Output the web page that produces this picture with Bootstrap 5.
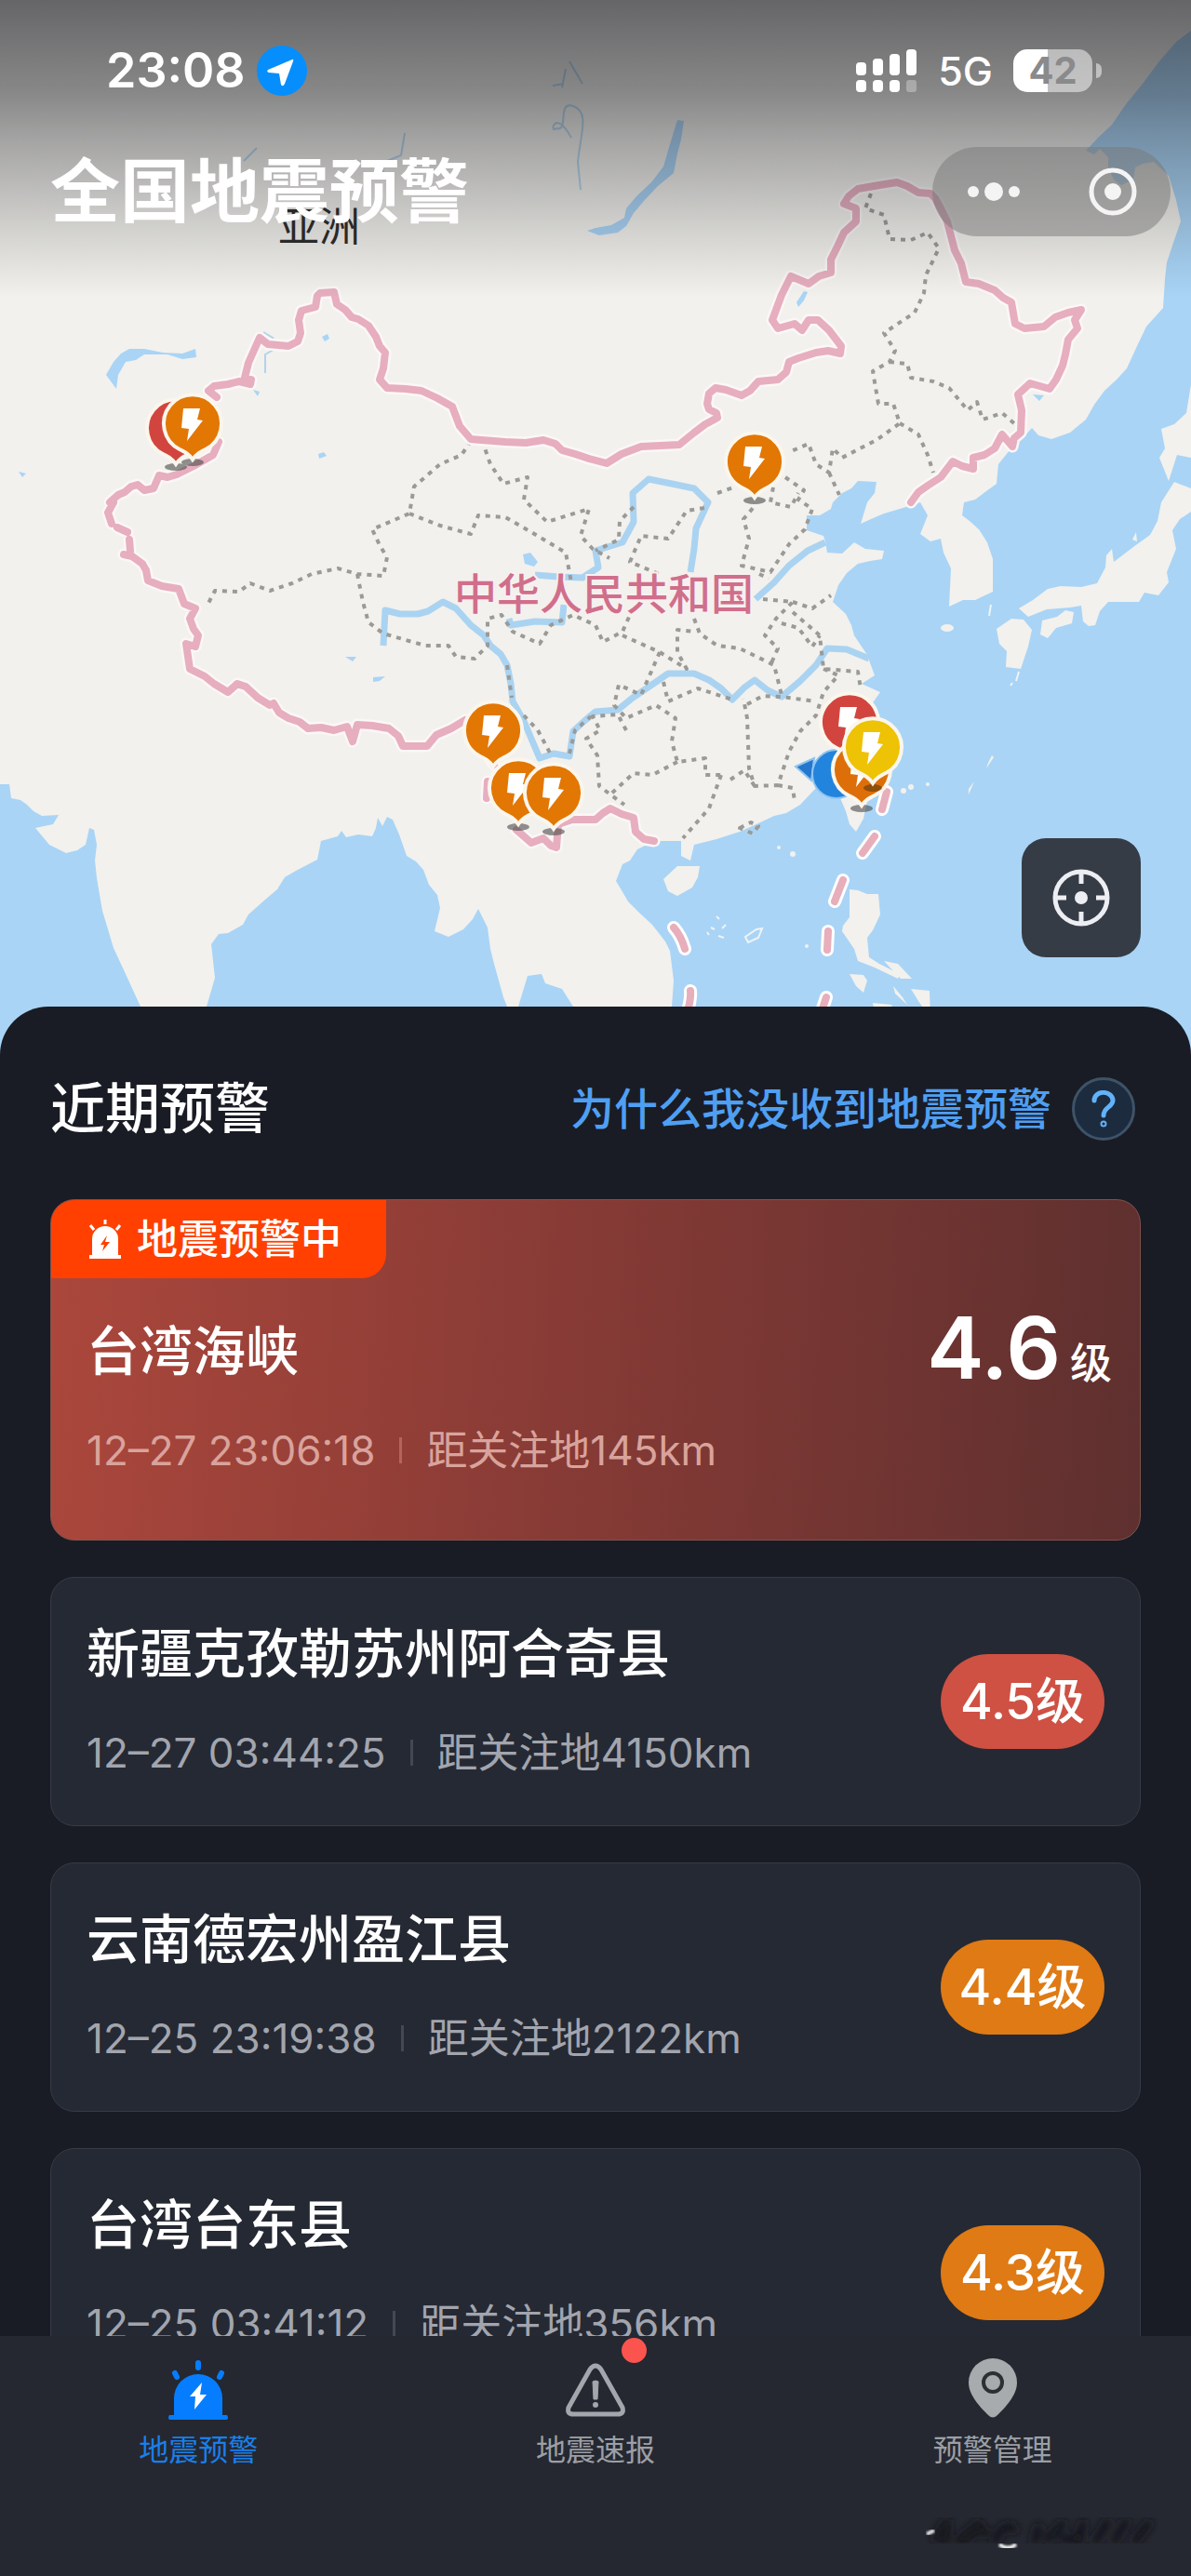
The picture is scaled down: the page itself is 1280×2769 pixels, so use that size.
<!DOCTYPE html>
<html lang="zh-CN">
<head>
<meta charset="utf-8">
<meta name="viewport" content="width=device-width, initial-scale=1">
<title>全国地震预警</title>
<link href="https://cdn.jsdelivr.net/npm/bootstrap@5.3.0/dist/css/bootstrap.min.css" rel="stylesheet">
<style>
  :root { --sheet: #191c24; --panel: #252933; --muted: #a2a5ae; --gutter: 54px; }
  body { background: var(--sheet); color: #fff; font-family: Inter, "Noto Sans CJK SC", sans-serif; }
  .map-svg { display: block; width: 100%; height: auto; }
  .map-shade { height: 320px; background: linear-gradient(rgba(26,27,32,.65) 0, rgba(26,27,32,.49) 100px, rgba(26,27,32,.36) 150px, rgba(26,27,32,.25) 200px, rgba(26,27,32,.14) 250px, rgba(26,27,32,0) 320px); }
  .status-row { height: 152px; padding: 0 96px 0 114px; }
  .clock { font-size: 52px; font-weight: 600; line-height: 60px; }
  .clock-group { gap: 12px; }
  .net { font-size: 43px; font-weight: 500; line-height: 48px; }
  .net-group { gap: 22px; }
  .battery { width: 85px; height: 46px; border-radius: 15px; background: linear-gradient(90deg, #fff 43%, rgba(255,255,255,.5) 43%); color: #8a8a8c; font-size: 40px; font-weight: 700; line-height: 46px; }
  .battery-tip { width: 6px; height: 16px; border-radius: 0 8px 8px 0; background: rgba(255,255,255,.5); }
  .title-row { padding: 0 22px 0 var(--gutter); height: 108px; }
  .page-title { font-size: 75px; font-weight: 700; line-height: 96px; }
  .capsule { width: 256px; height: 96px; padding: 0 36px; border-radius: 48px; background: rgba(120,120,120,.5); }
  .btn-plain { background: none; border: 0; padding: 0; line-height: 0; }
  .locate { right: var(--gutter); bottom: 111px; width: 128px; height: 128px; border-radius: 26px; background: #363c45; }
  .sheet { position: relative; margin-top: -58px; padding: 74px var(--gutter) 300px; background: var(--sheet); border-radius: 52px 52px 0 0; }
  .sheet-head { margin-bottom: 61px; padding-right: 6px; }
  .sheet-title { font-size: 59px; font-weight: 500; line-height: 72px; }
  .why { font-size: 47px; font-weight: 500; line-height: 72px; color: #4f9ff2; gap: 22px; }
  .q-mark { width: 68px; height: 68px; border-radius: 50%; border: 3px solid #3e5368; background: #1d2b3f; color: #62b2f8; }
  .quake-list { gap: 39px; }
  .quake { border: 1px solid #373b45; border-radius: 26px; background: var(--panel); overflow: hidden; }
  .quake-body { padding: 50px 38px; }
  .quake-live { border-color: #80514c; background: linear-gradient(93deg, #ab473c, #853a35 50%, #5e302f); }
  .quake-live .quake-body { padding: 47px 30px 68px 38px; }
  .live-tag { width: 360px; height: 84px; padding-left: 40px; gap: 16px; border-radius: 0 0 26px 0; background: #ff4000; font-size: 44px; font-weight: 500; line-height: 84px; }
  .place { font-size: 57px; font-weight: 500; line-height: 64px; margin-bottom: 46px; }
  .facts { font-size: 44px; line-height: 56px; color: var(--muted); }
  .quake-live .facts { color: #d9a39c; }
  .facts-bar { width: 3px; height: 28px; margin: 0 26px; background: #444852; }
  .quake-live .facts-bar { background: #b3655d; }
  .big-mag { height: 56px; gap: 10px; font-size: 45px; font-weight: 500; line-height: 56px; }
  .big-mag strong { font-size: 92px; font-weight: 600; line-height: 56px; }
  .mag { width: 176px; height: 102px; border-radius: 51px; font-size: 53px; font-weight: 500; line-height: 102px; }
  .mag-red { background: #ce5144; }
  .mag-orange { background: #df7a14; }
  .tabs { height: 258px; padding-top: 22px; background: #252830; }
  .tab { font-size: 32px; line-height: 40px; color: #9c9fa5; }
  .tab svg { display: block; margin-bottom: 9px; }
  .tab.active { color: #1a7fe8; }
  .tab-dot { width: 27px; height: 27px; left: 50%; top: -20px; margin-left: 28px; background: #fb544f; }
  .signature { right: 28px; bottom: 22px; }
</style>
</head>
<body>

<header class="position-relative">
  <svg class="map-svg" viewBox="0 0 1280 1140" role="img" aria-label="地图">
    <defs>
      <path id="drop" d="M0 39C-4 33-8 31-14 28A31 31 0 1 1 14 28C8 31 4 33 0 39Z"/>
      <path id="bolt" d="M-10-16H8L5-4 11-3-6 19-4 6-12 5Z" fill="#fff"/>
      <g id="foot"><ellipse cy="42" rx="12" ry="4" fill="#4a4a4a" opacity=".6"/></g>
      <path id="frontier" d="M118 540L127 532 134 529 141 523 148 521 155 527 165 525 171 511 180 513 190 510 208 501 229 489 235 475M233 427L224 420 230 415 245 413 257 410 269 413 270 408 263 406 267 390 279 363 288 370 310 372 320 367 323 358 321 344 324 334 339 330 341 318 344 315 359 314 362 327 371 333 378 341 385 343 396 350 404 362 408 372 414 379 412 396 408 408 416 417 436 418 453 420 470 428 486 437 494 458 506 472 543 475 565 476 584 473 597 477 604 484 618 488 633 493 652 498 668 488 689 480 730 478 746 465 758 456 771 449 770 444 762 440 760 434 762 423 769 417 780 419 797 425 806 420 815 410 836 408 845 400 848 389 858 385 877 379 890 377 903 380 904 372 891 355 879 344 869 344 862 355 854 348 836 353 830 344 840 317 850 297 869 305 880 297 893 293 893 279 900 265 907 250 920 238 920 224 907 219 912 211 922 203 945 199 964 196 975 200 987 207 1000 208 1005 213 1012 226 1018 238 1026 269 1033 283 1038 303 1052 305 1069 312 1078 320 1087 325 1091 348 1101 353 1122 351 1134 341 1148 336 1162 333 1155 344 1158 353 1148 365 1145 381 1142 393 1135 408 1128 418 1107 412 1094 424 1098 441 1097 465 1090 471 1088 480 1077 467 1069 482 1058 489 1046 492 1046 504 1034 501 1024 496 1011 513 997 522 987 529 979 540M122 540L116 551 120 563M126 567L137 572M139 580L140 592M133 596L142 598 153 606 157 613 159 624 174 630 192 633 198 649 210 654 204 665 208 676 213 683 210 695 200 692 204 719 220 727 230 735 245 744 255 735 264 738 277 750 290 758 294 756 300 766 310 772 322 776 331 783 345 782 359 785 373 781 379 797 384 779 400 780 418 783 428 791 433 802 459 802 469 790 485 783 500 774 531 822M524 840L523 858M555 892L571 906 584 901 592 909 598 911 600 886 615 881 640 881 648 874 656 869 668 875 681 879 683 894 692 902 703 904"/>
    </defs>
    <rect width="1280" height="1140" fill="#f2f1ed"/>
    <g fill="#a9d4f6">
      <path d="M0 843H10L12 858 22 860 29 865 36 872 45 877 63 876 57 886 38 890 53 908 71 917 83 914 92 908 96 890 101 892 104 908 102 925 104 944 110 979 122 1019 135 1047 151 1082 165 1140H0Z"/>
      <path d="M215 1140L222 1082 231 1051 227 1015 235 1004 245 1003 261 994 267 983 285 967 298 956 306 943 318 936 341 924 345 904 363 899 367 893 372 900 385 897 400 899 404 890 406 879 411 888 416 878 422 881 429 897 437 920 447 926 455 935 461 951 470 962 473 976 467 1001 482 1007 498 999 508 988 514 977 524 997 527 1020 531 1036 541 1072 545 1082 550 1140ZM545 1140L557 1082 567 1049 582 1047 586 1057 604 1063 616 1082 640 1140Z"/>
      <path d="M722 1140V1082L724 1054 720 1022 715 1012 701 994 688 982 675 969 668 957 662 947 669 929 677 925 685 913 703 904 732 904 732 920 742 925 746 908 770 902 795 894 815 885 832 877 845 874 860 865 877 847 890 825 901 804 920 780 934 761 946 744 926 735 940 726 932 704 918 683 915 672 909 660 895 647 901 629 910 616 922 606 935 603 948 601 950 592 930 590 918 583 905 595 889 594 887 582 885 576 867 570 867 554 881 554 893 547 895 540 905 530 915 525 922 517 942 518 940 530 932 540 925 563 936 558 950 552 967 547 989 540 997 554 989 574 1000 582 1011 579 1014 594 1022 611 1020 652 1035 645 1048 645 1067 636 1067 601 1061 583 1052 569 1042 560 1034 554 1036 540 1048 537 1060 528 1071 520 1073 499 1089 479 1100 470 1109 460 1116 468 1130 472 1150 465 1167 451 1176 435 1187 420 1200 408 1211 396 1222 372 1232 351 1250 331 1252 300 1254 282 1262 258 1269 238 1264 215 1256 189 1240 174 1228 176 1220 180 1218 193 1205 199 1197 193 1191 180 1191 169 1182 160 1176 166 1167 162 1180 148 1195 134 1210 112 1228 90 1245 67 1264 45 1280 33V1140Z"/>
      <path d="M728 129L735 130 732 150 728 165 724 186 707 200 692 216 681 229 673 243 664 250 644 253 631 248 640 245 657 242 671 234 673 224 685 210 700 196 713 179 720 155ZM114 403L122 389 130 380 139 375 155 375 175 379 196 380 210 375 211 384 196 386 180 381 155 381 146 387 135 389 127 403 125 418ZM856 325L864 313 868 314 864 323 858 330Z"/>
      <path d="M272 419l7 2-2 5zM342 488l6-2 3 4-8 3zM346 362l6-3 2 5-5 3zM20 507l8 2-4 4zM562 596l8-2 8 10-4 5-10-3zM401 728l13-1-6 5-7 1zM371 706h12l-4 5zM1110 424l12 1-5 6z"/>
    </g>
    <g fill="none" stroke="#9cc9ea" stroke-width="2" opacity=".75">
      <path d="M283 357l10 6 6 10-14 8 0 20M412 190l-1-15 20-8 4-24M614 148c-18-33-24-3-16-10 14 4 0-30 18-24s8 30 5 60l3 30M594 92l12-2M604 94l4-20M612 66l14 24M262 173l14-14"/>
    </g>
    <g fill="none" stroke="#aad3f1" stroke-width="7" stroke-linejoin="round">
      <path d="M412 694L414 656 430 660 449 660 460 657 476 647 490 654 506 672 520 683 527 694 538 703 545 715 549 735 551 754 563 775 571 794 580 815 595 810 612 813 616 786 628 775 640 765 664 763 680 750 705 733 718 724 746 724 762 731 775 740 787 752 800 739 811 731 825 742 840 749 860 732 877 715 889 697 910 698 934 708"/>
      <path d="M547 665L549 672 575 668 604 669 606 650M575 618L600 620 626 621 643 610 640 592 669 583 681 561 680 530 697 515 722 520 746 525 761 540 748 568 746 590 742 615M812 644L832 626 848 608 868 592 887 583"/>
    </g>
    <g fill="none" stroke="#9a9a97" stroke-width="4" stroke-dasharray="5 6" stroke-linejoin="round">
      <path d="M506 474L496 489 473 499 445 523 440 552 400 569 408 586 416 599 412 619 384 617 363 611 335 617 314 627 290 635 269 627 257 636 231 635 222 652"/>
      <path d="M384 617L390 647 396 669 412 681 457 694 482 694 490 706 510 708 524 694 524 665 539 661 551 679 580 692 592 672 616 661 640 672 648 690 669 679 677 661"/>
      <path d="M518 473L527 499 541 520 567 513 563 537 588 561 633 547 624 576 637 590 655 600M440 552L473 565 506 574 514 554 543 556 571 572 608 594 614 626"/>
      <path d="M936 208L930 224 950 231 956 257 979 258 997 250 1009 267 995 296 993 315 983 336 950 358 962 377 956 389 938 399 944 434 960 434 967 455 942 473 905 492 895 482 891 508 877 499 869 477 848 486M956 389L975 391 979 406 1003 410 1020 417 1040 441 1050 432 1056 451 1077 444 1091 456M967 455L987 467 997 489 1003 508M891 508L902 532"/>
      <path d="M844 513L864 527 858 537 873 547 865 569 848 585 828 615 797 608 805 579 799 558 811 544M833 513L828 540 850 545 858 530M771 530L791 523M757 546L738 549 718 579 689 576 677 604 713 619M681 545L666 560 665 580 640 592"/>
      <path d="M746 665L752 681 771 694 795 697 832 715 840 747M816 617L826 622M820 644L852 647 834 665 822 683 836 697 828 715M852 647L873 654 893 640M840 670L858 675 873 695 881 683M852 658L881 683 885 719 922 722 925 740M885 719L901 726 885 744 877 769 860 786 848 808 836 844 811 845 805 826 803 772 799 751M836 844L852 847 854 861M803 757L820 748 840 749 877 754"/>
      <path d="M669 683L709 701 738 719 728 701 728 677 746 679M709 701L689 747 665 736 660 758 673 772 705 758 726 772 722 797 728 819 758 815 758 833 775 833M713 733L718 754 750 740 787 752M785 838L800 828 811 845M775 833L762 869 734 901M728 819L701 833 681 831 656 854 671 865M673 785L664 768 637 770 645 785 630 794 642 812 644 845 656 854M563 769L578 785 592 811M795 890l12-6 8 4-6 8zM545 715L550 750M612 810L618 785 635 770"/>
    </g>
    <g fill="#f2f1ed">
      <path d="M1280 413L1275 444 1262 456 1248 461 1252 482 1246 492 1256 517 1265 489 1280 492ZM1262 518L1248 540 1244 560 1236 575 1218 588 1197 604 1195 590 1189 597 1188 610 1179 627 1162 631 1140 630 1126 633 1110 645 1095 654 1105 663 1125 655 1150 653 1162 651 1164 668 1170 673 1177 672 1182 657 1191 647 1224 647 1230 637 1245 640 1256 626 1254 615 1264 590 1260 570 1268 558 1280 550V525ZM1120 667L1136 663 1145 656 1154 658 1152 670 1135 675 1126 686 1118 682ZM1071 676L1087 665 1100 666 1109 677 1105 695 1097 719 1081 717 1082 700 1074 692Z"/>
      <ellipse cx="1018" cy="675" rx="7" ry="4"/>
      <path d="M900 851L932 845 932 861 928 880 920 894 913 886 909 872ZM713 945L728 931 752 931 750 943 744 954 728 963 718 958ZM913 956L922 957 932 961 944 961 946 983 938 1000 932 1008 934 1029 945 1036 967 1047 965 1052 940 1040 922 1033 918 1020 905 1001 906 995 913 986ZM913 1047L928 1048 932 1054 928 1067 920 1060ZM950 1033L965 1036 980 1052 968 1052ZM979 1063L999 1065 1000 1095 987 1076ZM960 1060L970 1072 975 1080 962 1068ZM938 1078L958 1080 965 1095 940 1090ZM1217 580l4-8 1 10zM1062 820l4-8 2 2-8 12zM1041 848l6-8-6 14z"/>
      <circle cx="852" cy="918" r="3"/><circle cx="837" cy="911" r="2"/><circle cx="971" cy="850" r="3"/><circle cx="979" cy="846" r="3"/><circle cx="997" cy="843" r="2"/><circle cx="867" cy="1017" r="2"/>
    </g>
    <g fill="none" stroke="#eef4f6" stroke-width="2"><path d="M801 1007l12-8 6-1-4 10-11 5zM770 985l3 3M764 997l4 2M776 998l4-4M772 1006l6 2M760 1002l2 3M1065 650l-2 12M1086 737l2-3M1092 732l3-10"/></g>
    <g fill="none" stroke-linejoin="round" stroke-linecap="round">
      <use href="#frontier" stroke="#fbf7f6" stroke-width="13"/>
      <use href="#frontier" stroke="#e6aebf" stroke-width="8"/>
      <path d="M724 997Q732 1006 736 1020M742 1065Q743 1074 738 1090M888 1072L882 1090M890 1001L889 1021M906 946L897 969M940 899L927 917M953 851L948 870" stroke="#fff" stroke-width="14"/>
      <path d="M724 997Q732 1006 736 1020M742 1065Q743 1074 738 1090M888 1072L882 1090M890 1001L889 1021M906 946L897 969M940 899L927 917M953 851L948 870" stroke="#e7aebb" stroke-width="8"/>
    </g>
    <g font-family="Noto Sans CJK SC, sans-serif" text-anchor="middle">
      <text x="649" y="655" font-size="46" font-weight="500" fill="#d06f8b" stroke="#f7f0f0" stroke-width="4" paint-order="stroke">中华人民共和国</text>
      <text x="343" y="260" font-size="44" fill="#2b2b2b">亚洲</text>
    </g>
    <g stroke="#fbf6ec" stroke-width="4">
      <g transform="translate(189 460)"><use href="#foot" stroke="none"/><use href="#drop" fill="#d2453f"/></g>
      <g transform="translate(207 455)"><use href="#foot" stroke="none"/><use href="#drop" fill="#e27704"/><use href="#bolt" stroke="none"/></g>
      <g transform="translate(811 496)"><use href="#foot" stroke="none"/><use href="#drop" fill="#e27704"/><use href="#bolt" stroke="none"/></g>
      <g transform="translate(530 785)"><use href="#drop" fill="#e27704"/><use href="#bolt" stroke="none"/></g>
      <g transform="translate(557 847)"><use href="#foot" stroke="none"/><use href="#drop" fill="#e27704"/><use href="#bolt" stroke="none"/></g>
      <g transform="translate(595 852)"><use href="#foot" stroke="none"/><use href="#drop" fill="#e27704"/><use href="#bolt" stroke="none"/></g>
      <g stroke="#8fc3f0" stroke-width="2"><path d="M855 824L875 815 872 839Z" fill="#2377cc"/><circle cx="899" cy="832" r="26" fill="#2284dc"/></g>
      <g transform="translate(913 776)"><use href="#drop" fill="#d2453f"/><use href="#bolt" stroke="none"/></g>
      <g transform="translate(926 827)"><use href="#foot" stroke="none"/><use href="#drop" fill="#de6f08"/><use href="#bolt" stroke="none"/></g>
      <g transform="translate(938 803)"><ellipse cy="44" rx="10" ry="4" fill="#70400c" stroke="none" opacity=".7"/><use href="#drop" fill="#eec205"/><use href="#bolt" stroke="none"/></g>
    </g>
  </svg>

  <div class="map-shade position-absolute top-0 start-0 w-100">
    <div class="status-row d-flex align-items-center justify-content-between">
      <div class="clock-group d-flex align-items-center">
        <span class="clock">23:08</span>
        <svg width="54" height="54" viewBox="0 0 54 54" aria-hidden="true"><circle cx="27" cy="27" r="27" fill="#068efc"/><path d="M38 15L12 26Q10 28 13 29L24 30 26 42Q28 45 30 41L39 17Q40 14 38 15Z" fill="#fff"/></svg>
      </div>
      <div class="net-group d-flex align-items-center">
        <svg width="66" height="46" viewBox="0 0 66 46" fill="#fff" aria-hidden="true"><rect y="14" width="11" height="14" rx="4"/><rect x="18" y="10" width="11" height="18" rx="4"/><rect x="36" y="5" width="11" height="23" rx="4"/><rect x="54" width="11" height="28" rx="4"/><rect y="33" width="11" height="13" rx="4"/><rect x="18" y="33" width="11" height="13" rx="4"/><rect x="36" y="33" width="11" height="13" rx="4"/><rect x="54" y="33" width="11" height="13" rx="3" opacity=".3"/></svg>
        <span class="net">5G</span>
        <span class="d-flex align-items-center"><span class="battery text-center">42</span><span class="battery-tip ms-1"></span></span>
      </div>
    </div>
    <div class="title-row d-flex align-items-center justify-content-between">
      <h1 class="page-title m-0">全国地震预警</h1>
      <div class="capsule d-flex align-items-center justify-content-between">
        <button class="btn-plain" type="button" aria-label="更多"><svg width="60" height="60" viewBox="0 0 60 60" fill="#f4f4f4"><circle cx="8" cy="30" r="6"/><circle cx="30" cy="30" r="10"/><circle cx="52" cy="30" r="6"/></svg></button>
        <button class="btn-plain" type="button" aria-label="关闭"><svg width="52" height="52" viewBox="0 0 52 52"><circle cx="26" cy="26" r="23" fill="none" stroke="#f4f4f4" stroke-width="5"/><circle cx="26" cy="26" r="9" fill="#f4f4f4"/></svg></button>
      </div>
    </div>
  </div>

  <button class="locate btn-plain position-absolute" type="button" aria-label="定位">
    <svg width="62" height="62" viewBox="0 0 62 62" fill="none" stroke="#eceef3" stroke-width="5"><circle cx="31" cy="31" r="28"/><path d="M31 3v13M31 46v13M3 31h12M47 31h12"/><circle cx="31" cy="31" r="7" fill="#eceef3" stroke="none"/></svg>
  </button>
</header>

<main class="sheet">
  <div class="sheet-head d-flex align-items-center justify-content-between">
    <h2 class="sheet-title m-0">近期预警</h2>
    <a class="why d-flex align-items-center text-decoration-none" href="#why">为什么我没收到地震预警
      <span class="q-mark d-flex align-items-center justify-content-center"><svg width="28" height="40" viewBox="0 0 28 40" fill="none" stroke="currentColor" stroke-width="5" stroke-linecap="round" aria-hidden="true"><path d="M4 11C4-1 24 0 24 11C24 18 14 18 14 27"/><circle cx="14" cy="36" r="1"/></svg></span>
    </a>
  </div>

  <div class="quake-list d-flex flex-column">
    <article class="quake quake-live">
      <div class="live-tag d-flex align-items-center">
        <svg width="36" height="42" viewBox="0 0 36 42" aria-hidden="true"><path d="M4 38V21a14 14 0 0 1 28 0V38h3v4H1v-4Z" fill="#fff"/><path d="M18 0v5M2 6l4 5M34 6l-4 5" stroke="#fff" stroke-width="3"/><path d="M20 17l-7 10h4l-2 7 8-10h-5Z" fill="#ff4000"/></svg>
        <span>地震预警中</span>
      </div>
      <div class="quake-body">
        <div class="d-flex justify-content-between">
          <h3 class="place">台湾海峡</h3>
          <div class="big-mag d-flex align-items-baseline"><strong>4.6</strong><span>级</span></div>
        </div>
        <div class="facts d-flex align-items-center"><time>12–27 23:06:18</time><span class="facts-bar"></span><span>距关注地145km</span></div>
      </div>
    </article>

    <article class="quake">
      <div class="quake-body d-flex align-items-center justify-content-between">
        <div>
          <h3 class="place">新疆克孜勒苏州阿合奇县</h3>
          <div class="facts d-flex align-items-center"><time>12–27 03:44:25</time><span class="facts-bar"></span><span>距关注地4150km</span></div>
        </div>
        <span class="mag mag-red text-center">4.5级</span>
      </div>
    </article>

    <article class="quake">
      <div class="quake-body d-flex align-items-center justify-content-between">
        <div>
          <h3 class="place">云南德宏州盈江县</h3>
          <div class="facts d-flex align-items-center"><time>12–25 23:19:38</time><span class="facts-bar"></span><span>距关注地2122km</span></div>
        </div>
        <span class="mag mag-orange text-center">4.4级</span>
      </div>
    </article>

    <article class="quake">
      <div class="quake-body d-flex align-items-center justify-content-between">
        <div>
          <h3 class="place">台湾台东县</h3>
          <div class="facts d-flex align-items-center"><time>12–25 03:41:12</time><span class="facts-bar"></span><span>距关注地356km</span></div>
        </div>
        <span class="mag mag-orange text-center">4.3级</span>
      </div>
    </article>
  </div>
</main>

<nav class="tabs fixed-bottom">
  <div class="row g-0">
    <a class="tab active col-4 d-flex flex-column align-items-center text-decoration-none" href="#warning">
      <svg width="66" height="72" viewBox="0 0 66 72" aria-hidden="true"><path d="M7 63V45a26 26 0 0 1 52 0V63h5q2 3 0 5H2q-2-2 0-5Z" fill="#067dff"/><path d="M33 7v5M8 18l2 4M58 18l-2 4" stroke="#067dff" stroke-width="6" stroke-linecap="round"/><path d="M37 28L24 43h6l-1 14L42 41h-7Z" fill="#fff"/></svg>
      <span>地震预警</span>
    </a>
    <a class="tab col-4 d-flex flex-column align-items-center text-decoration-none position-relative" href="#reports">
      <svg width="66" height="72" viewBox="0 0 66 72" aria-hidden="true"><path d="M27 14Q33 6 39 14L62 55Q64 62 57 62H9Q2 62 4 55Z" fill="none" stroke="#a3a6ac" stroke-width="5"/><path d="M30 27Q33 25 36 27L35 46H31Z" fill="#a3a6ac" stroke="#a3a6ac"/><circle cx="33" cy="52" r="3" fill="#a3a6ac"/></svg>
      <span>地震速报</span>
      <span class="tab-dot position-absolute rounded-circle"></span>
    </a>
    <a class="tab col-4 d-flex flex-column align-items-center text-decoration-none" href="#manage">
      <svg width="66" height="72" viewBox="0 0 66 72" aria-hidden="true"><path d="M33 2A26 26 0 0 1 59 28C59 42 46 55 38 63Q33 68 28 63C20 55 7 42 7 28A26 26 0 0 1 33 2Z" fill="#a7abad"/><circle cx="33" cy="28" r="10" fill="none" stroke="#2c2f33" stroke-width="4"/></svg>
      <span>预警管理</span>
    </a>
  </div>
  <svg class="signature position-absolute" width="260" height="50" viewBox="0 0 260 50" aria-hidden="true">
    <defs><filter id="soft"><feGaussianBlur stdDeviation="4"/></filter><filter id="faint"><feGaussianBlur stdDeviation="1"/></filter></defs>
    <g filter="url(#soft)" fill="none" stroke="#14161a" stroke-width="9" stroke-linecap="round"><path d="M14 32L26 12 24 34M38 34l22-18M48 32q10-14 20-6M78 34q8-22 20-12M120 34l4-14M134 32l16-16M150 32h20M172 16l-6 18M186 34l12-20M206 34l12-20M228 34l14-18"/></g>
    <path d="M4 27l8-4" stroke="#e8e8e8" stroke-width="4" filter="url(#faint)"/><path d="M82 38q9 7 18 0" fill="none" stroke="#f4f4f4" stroke-width="4" filter="url(#faint)"/>
  </svg>
</nav>

<script src="https://cdn.jsdelivr.net/npm/bootstrap@5.3.0/dist/js/bootstrap.bundle.min.js"></script>
</body>
</html>
